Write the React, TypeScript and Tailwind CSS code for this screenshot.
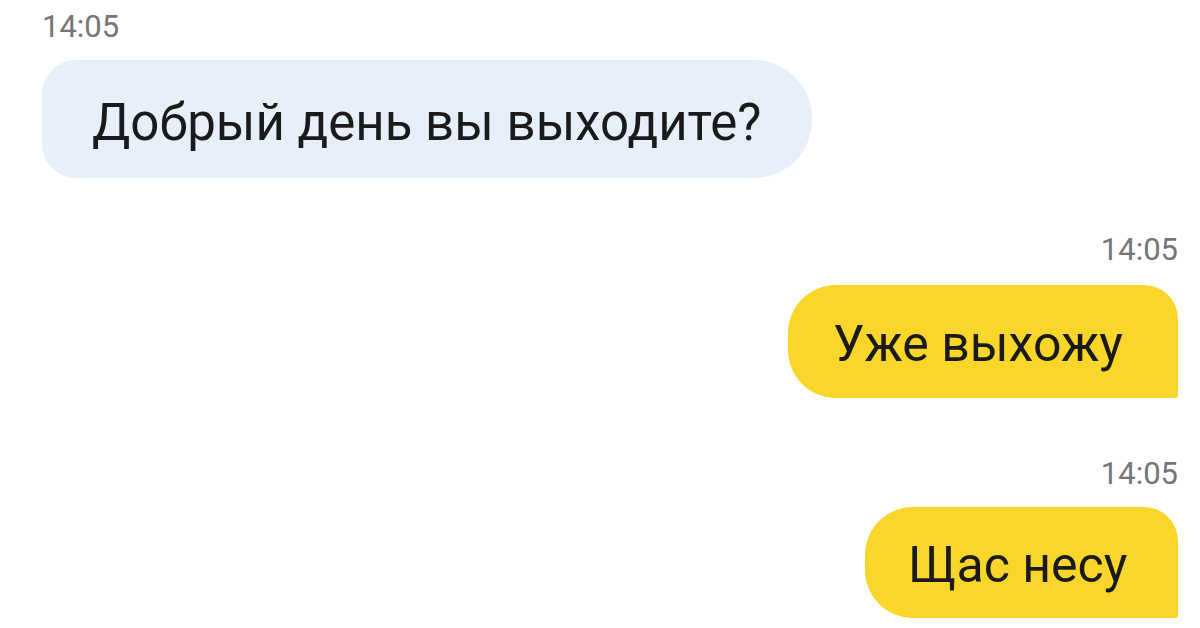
const Time = ({ children }: { children: string }) => (
  <div className="h-[30px] text-[31px] leading-none text-[#767676]">{children}</div>
)

export default function App() {
  return (
    <div
      className="w-[1200px] h-[628px] overflow-hidden bg-white flex flex-col pl-[20px] pr-[22px] text-[#1a1a1a]"
      style={{ fontFamily: 'Roboto, "Noto Sans", sans-serif' }}
    >
      <div className="pl-[22px] pt-[11px]">
        <Time>14:05</Time>
        <div className="mt-[19px] w-[770px] h-[118px] flex items-center pl-[50px] pt-[6px] bg-[#e7f0fa] rounded-l-[34px] rounded-r-[58px]">
          <span className="text-[51px] leading-none">Добрый день вы выходите?</span>
        </div>
      </div>

      <div className="flex flex-col items-end mt-[56px]">
        <Time>14:05</Time>
        <div className="mt-[21px] w-[390px] h-[113px] flex items-center pl-[45px] pt-[4px] bg-[#fad62a] rounded-l-[48px] rounded-tr-[34px] rounded-br-[3px]">
          <span className="text-[50px] leading-none">Уже выхожу</span>
        </div>
      </div>

      <div className="flex flex-col items-end mt-[60px]">
        <Time>14:05</Time>
        <div className="mt-[19px] w-[313px] h-[111px] flex items-center pl-[43px] pt-[4px] bg-[#fad62a] rounded-l-[48px] rounded-tr-[34px] rounded-br-[3px]">
          <span className="text-[50px] leading-none">Щас несу</span>
        </div>
      </div>
    </div>
  )
}
